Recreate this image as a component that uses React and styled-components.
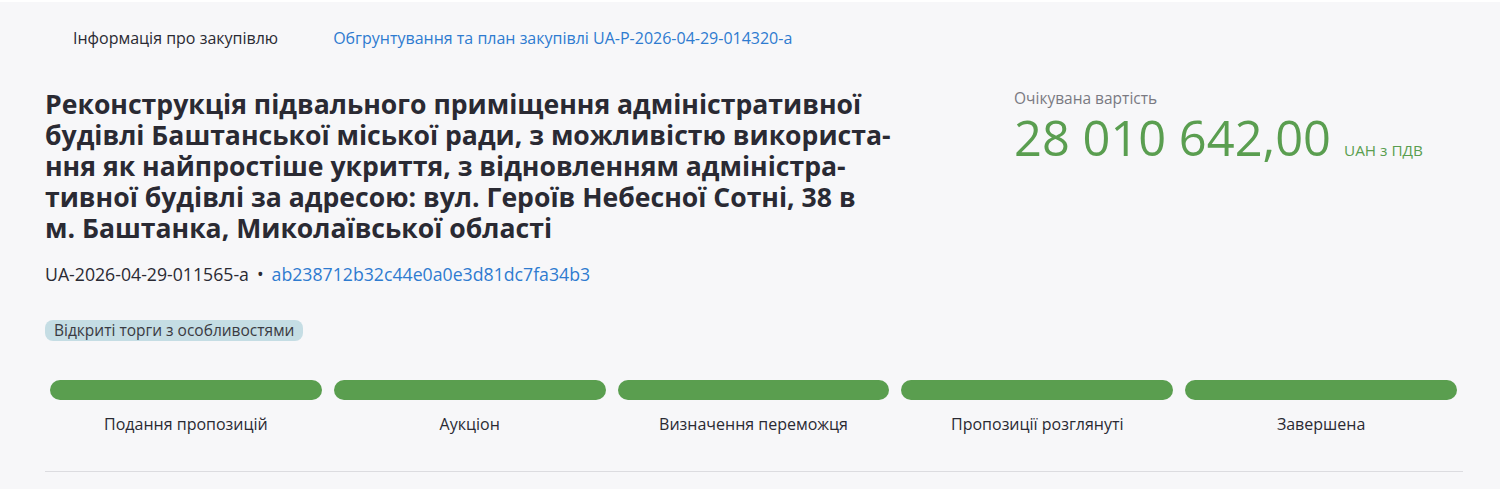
import React from 'react'
import styled, { createGlobalStyle } from 'styled-components'

const GlobalStyle = createGlobalStyle`
  html, body {
    margin: 0;
    padding: 0;
    background: #f7f7f9;
    font-family: 'Open Sans', 'Noto Sans', sans-serif;
    color: #2a2a33;
  }
`

const Page = styled.main`
  padding: 0 37px 0 45px;
  border-top: 2px solid #ffffff;
`

const Tabs = styled.nav`
  display: flex;
  align-items: center;
  height: 72px;
  padding-left: 28px;
  gap: 55px;
  margin-bottom: 15px;
`

const Tab = styled.a`
  font-size: 16px;
  text-decoration: none;
  color: ${p => (p.$link ? '#2e7bd0' : '#2a2a33')};
  font-weight: ${p => (p.$link ? 500 : 400)};
  cursor: pointer;
`

const Head = styled.section`
  display: grid;
  grid-template-columns: 969px 1fr;
`

const Title = styled.h1`
  margin: 0;
  font-size: 26.6px;
  line-height: 31px;
  font-weight: 700;
  color: #2a2a33;

  span {
    display: block;
    white-space: nowrap;
  }
`

const Price = styled.div`
  margin-top: -1px;
`

const PriceLabel = styled.div`
  font-size: 15.5px;
  line-height: 21px;
  color: #7a7a82;
`

const Amount = styled.div`
  display: flex;
  align-items: baseline;
  gap: 13px;
  margin-top: 4px;
  color: #5a9e50;
`

const Sum = styled.span`
  font-size: 48.8px;
  line-height: 1;
  font-weight: 400;
`

const Currency = styled.span`
  font-size: 15.3px;
`

const Ids = styled.div`
  margin-top: 18px;
  font-size: 17.7px;
  line-height: 24px;
  display: flex;
  align-items: center;
  gap: 8px;
`

const Hash = styled.a`
  color: #2e7bd0;
  text-decoration: none;
`

const Badge = styled.span`
  display: block;
  width: fit-content;
  margin-top: 34px;
  padding: 0 9px;
  background: #c5dde4;
  border-radius: 8px;
  font-size: 15.5px;
  line-height: 21px;
  color: #3a3a42;
`

const Stages = styled.ol`
  list-style: none;
  margin: 39px 0 0;
  padding: 0 6px 0 5px;
  display: grid;
  grid-template-columns: repeat(5, 1fr);
  gap: 12px;
`

const Stage = styled.li`
  display: flex;
  flex-direction: column;
  align-items: center;
  gap: 13px;
  font-size: 16px;
  color: #2a2a33;
`

const Bar = styled.div`
  width: 100%;
  height: 20px;
  border-radius: 10px;
  background: ${p => (p.$done ? '#5a9e4f' : '#d7d7dd')};
`

const Rule = styled.hr`
  margin: 36px 0 0;
  border: 0;
  border-top: 1px solid #dcdce0;
`

const stages = [
  'Подання пропозицій',
  'Аукціон',
  'Визначення переможця',
  'Пропозиції розглянуті',
  'Завершена',
]

export default function App() {
  return (
    <>
      <GlobalStyle />
      <Page>
        <Tabs>
          <Tab>Інформація про закупівлю</Tab>
          <Tab $link>Обгрунтування та план закупівлі UA-P-2026-04-29-014320-a</Tab>
        </Tabs>
        <Head>
          <div>
            <Title>
              <span>Реконструкція підвального приміщення адміністративної</span>
              <span>будівлі Баштанської міської ради, з можливістю використа-</span>
              <span>ння як найпростіше укриття, з відновленням адміністра-</span>
              <span>тивної будівлі за адресою: вул. Героїв Небесної Сотні, 38 в</span>
              <span>м. Баштанка, Миколаївської області</span>
            </Title>
            <Ids>
              UA-2026-04-29-011565-a <span>•</span>
              <Hash>ab238712b32c44e0a0e3d81dc7fa34b3</Hash>
            </Ids>
            <Badge>Відкриті торги з особливостями</Badge>
          </div>
          <Price>
            <PriceLabel>Очікувана вартість</PriceLabel>
            <Amount>
              <Sum>28 010 642,00</Sum>
              <Currency>UAH з ПДВ</Currency>
            </Amount>
          </Price>
        </Head>
        <Stages>
          {stages.map(s => (
            <Stage key={s}>
              <Bar $done />
              {s}
            </Stage>
          ))}
        </Stages>
        <Rule />
      </Page>
    </>
  )
}
